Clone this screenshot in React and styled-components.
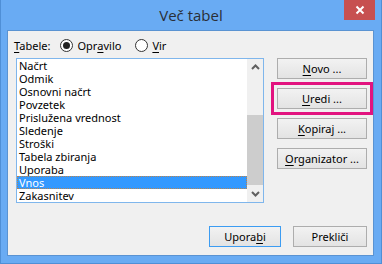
import React from "react";
import styled, { createGlobalStyle } from "styled-components";

const Global = createGlobalStyle`
  html, body { margin: 0; padding: 0; background: #6aacf4; }
  body { font-family: "Noto Sans", "Open Sans", sans-serif; }
`;

const Frame = styled.div`
  width: 382px;
  height: 264px;
  box-sizing: border-box;
  background: #69abf3;
  border-left: 1px solid #4f8fd6;
  border-right: 1px solid #4f8fd6;
  border-bottom: 1px solid #4f8fd6;
  display: flex;
  flex-direction: column;
  padding: 0 7px 7px 6px;
`;

const TitleBar = styled.div`
  height: 30px;
  flex: none;
  position: relative;
  display: flex;
  align-items: center;
  justify-content: center;
`;

const Title = styled.div`
  font-family: "Open Sans", "Noto Sans", sans-serif;
  font-size: 15px;
  color: #2a2f36;
  margin-left: 1px;
  margin-top: -1px;
`;

const CloseBtn = styled.div`
  position: absolute;
  right: -1px;
  top: 0;
  width: 31px;
  height: 20px;
  background: #c75050;
  display: flex;
  align-items: center;
  justify-content: center;
`;

const Panel = styled.div`
  flex: 1;
  background: #f0f0f0;
  border: 1px solid #5a93d2;
  display: flex;
  flex-direction: column;
  padding: 0 0 0 6px;
  font-size: 11px;
  color: #000;
`;

const RadioRow = styled.div`
  display: flex;
  align-items: center;
  height: 27px;
  padding-top: 1px;
  box-sizing: border-box;
`;

const Label = styled.span`
  margin-right: 10px;
`;

const RadioOption = styled.label`
  display: flex;
  align-items: center;
  margin-right: ${(p) => p.$gap || 0}px;
`;

const RadioCircle = styled.span`
  width: 11px;
  height: 11px;
  border-radius: 50%;
  border: 1px solid #333;
  background: #fff;
  display: flex;
  align-items: center;
  justify-content: center;
  margin-right: 4px;
  &::after {
    content: "";
    display: ${(p) => (p.$checked ? "block" : "none")};
    width: 7px;
    height: 7px;
    border-radius: 50%;
    background: #222;
  }
`;

const U = styled.span`
  text-decoration: underline;
  text-underline-offset: 2px;
`;

const Body = styled.div`
  display: flex;
  align-items: flex-start;
  padding-left: 2px;
`;

const ListBox = styled.div`
  width: 248px;
  height: 145px;
  box-sizing: border-box;
  border: 1px solid #7fb6ec;
  background: #fff;
  display: flex;
`;

const Items = styled.div`
  flex: 1;
  display: flex;
  flex-direction: column;
`;

const Item = styled.div`
  height: 13px;
  line-height: 13px;
  padding-left: 2px;
  white-space: nowrap;
  color: ${(p) => (p.$selected ? "#fff" : "#000")};
  background: ${(p) => (p.$selected ? "#3399ff" : "transparent")};
  outline: ${(p) => (p.$selected ? "1px dotted #b8844e" : "none")};
  outline-offset: -1px;
`;

const ScrollBar = styled.div`
  width: 16px;
  background: #f0f0f0;
  display: flex;
  flex-direction: column;
`;

const Arrow = styled.div`
  height: 16px;
  display: flex;
  align-items: center;
  justify-content: center;
`;

const Track = styled.div`
  flex: 1;
  display: flex;
  flex-direction: column;
`;

const Thumb = styled.div`
  margin-top: 40px;
  height: 70px;
  background: #cdcdcd;
`;

const SideButtons = styled.div`
  display: flex;
  flex-direction: column;
  gap: 9px;
  margin-left: 13px;
`;

const Button = styled.div`
  width: ${(p) => p.$w || 90}px;
  height: 21px;
  box-sizing: border-box;
  border: 1px solid ${(p) => (p.$default ? "#3c9cf2" : "#adadad")};
  background: linear-gradient(#f2f2f2, #e3e3e3);
  display: flex;
  align-items: center;
  justify-content: center;
  outline: ${(p) => (p.$highlight ? "3px solid #e2137f" : "none")};
  outline-offset: 3px;
`;

const Footer = styled.div`
  display: flex;
  justify-content: flex-end;
  gap: 12px;
  margin-top: 23px;
  padding-right: 6px;
`;

const items = [
  "Načrt",
  "Odmik",
  "Osnovni načrt",
  "Povzetek",
  "Prislužena vrednost",
  "Sledenje",
  "Stroški",
  "Tabela zbiranja",
  "Uporaba",
  "Vnos",
  "Zakasnitev",
];

export default function App() {
  return (
    <>
      <Global />
      <Frame>
        <TitleBar>
          <Title>Več tabel</Title>
          <CloseBtn>
            <svg width="10" height="10" viewBox="0 0 10 10">
              <path d="M1.5 1.5 L8.5 8.5 M8.5 1.5 L1.5 8.5" stroke="#fff" strokeWidth="2" />
            </svg>
          </CloseBtn>
        </TitleBar>
        <Panel>
          <RadioRow>
            <Label>
              <U>T</U>abele:
            </Label>
            <RadioOption $gap={14}>
              <RadioCircle $checked />
              Opr<U>a</U>vilo
            </RadioOption>
            <RadioOption>
              <RadioCircle />
              <U>V</U>ir
            </RadioOption>
          </RadioRow>
          <Body>
            <ListBox>
              <Items>
                {items.map((t) => (
                  <Item key={t} $selected={t === "Vnos"}>
                    {t}
                  </Item>
                ))}
              </Items>
              <ScrollBar>
                <Arrow>
                  <svg width="9" height="6" viewBox="0 0 9 6">
                    <path d="M1 5 L4.5 1.5 L8 5" fill="none" stroke="#606060" strokeWidth="2" />
                  </svg>
                </Arrow>
                <Track>
                  <Thumb />
                </Track>
                <Arrow>
                  <svg width="9" height="6" viewBox="0 0 9 6">
                    <path d="M1 1 L4.5 4.5 L8 1" fill="none" stroke="#606060" strokeWidth="2" />
                  </svg>
                </Arrow>
              </ScrollBar>
            </ListBox>
            <SideButtons>
              <Button>
                <span>
                  <U>N</U>ovo ...
                </span>
              </Button>
              <Button $highlight>
                <span>
                  <U>U</U>redi ...
                </span>
              </Button>
              <Button>
                <span>
                  <U>K</U>opiraj ...
                </span>
              </Button>
              <Button>
                <span>
                  <U>O</U>rganizator ...
                </span>
              </Button>
            </SideButtons>
          </Body>
          <Footer>
            <Button $w={72} $default>
              <span>
                Upora<U>b</U>i
              </span>
            </Button>
            <Button $w={74}>Prekliči</Button>
          </Footer>
        </Panel>
      </Frame>
    </>
  );
}
